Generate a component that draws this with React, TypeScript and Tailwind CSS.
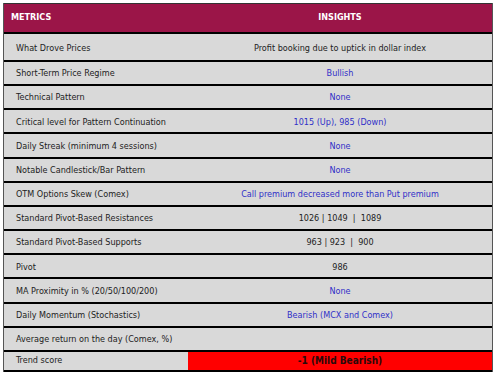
import React from "react";

type Row = { label: string; value: string; blue?: boolean };

const rows: Row[] = [
  { label: "Short-Term Price Regime", value: "Bullish", blue: true },
  { label: "Technical Pattern", value: "None", blue: true },
  { label: "Critical level for Pattern Continuation", value: "1015 (Up), 985 (Down)", blue: true },
  { label: "Daily Streak (minimum 4 sessions)", value: "None", blue: true },
  { label: "Notable Candlestick/Bar Pattern", value: "None", blue: true },
  { label: "OTM Options Skew (Comex)", value: "Call premium decreased more than Put premium", blue: true },
  { label: "Standard Pivot-Based Resistances", value: "1026 | 1049  |  1089" },
  { label: "Standard Pivot-Based Supports", value: "963 | 923  |  900" },
  { label: "Pivot", value: "986" },
  { label: "MA Proximity in % (20/50/100/200)", value: "None", blue: true },
  { label: "Daily Momentum (Stochastics)", value: "Bearish (MCX and Comex)", blue: true },
  { label: "Average return on the day (Comex, %)", value: "" },
];

export default function App() {
  return (
    <div
      className="w-[500px] h-[374px] bg-white pt-[3px] pl-[3px] overflow-hidden"
      style={{ fontFamily: '"DejaVu Sans Condensed", "DejaVu Sans", sans-serif' }}
    >
      <div className="w-[490px] border-x border-[#555] text-[9px] text-[#222]">
        <div className="grid grid-cols-[184px_1fr] h-[29px] bg-[#9b1548] text-white font-bold border-t border-[#333] items-center">
          <div className="pl-[7px]">METRICS</div>
          <div className="text-center">INSIGHTS</div>
        </div>
        <div className="grid grid-cols-[184px_1fr] h-[28px] bg-[#d9d9d9] border-t-2 border-black items-center pt-[3px]">
          <div className="pl-[12px] whitespace-nowrap">What Drove Prices</div>
          <div className="text-center whitespace-pre">Profit booking due to uptick in dollar index</div>
        </div>
        {rows.map((r, i) => (
          <div
            key={i}
            className="grid grid-cols-[184px_1fr] h-[24.17px] bg-[#d9d9d9] border-t-2 border-black items-center pt-[2px]"
          >
            <div className="pl-[12px] whitespace-nowrap">{r.label}</div>
            <div className={`text-center whitespace-pre ${r.blue ? "text-[#3030c8]" : ""}`}>{r.value}</div>
          </div>
        ))}
        <div className="grid grid-cols-[184px_1fr] h-[22px] bg-[#d9d9d9] border-y-2 border-black items-center">
          <div className="pl-[12px]">Trend score</div>
          <div className="h-full bg-[#ff0000] flex items-center justify-center font-bold text-[10px] text-[#2a0a0a]">
            -1 (Mild Bearish)
          </div>
        </div>
      </div>
    </div>
  );
}
